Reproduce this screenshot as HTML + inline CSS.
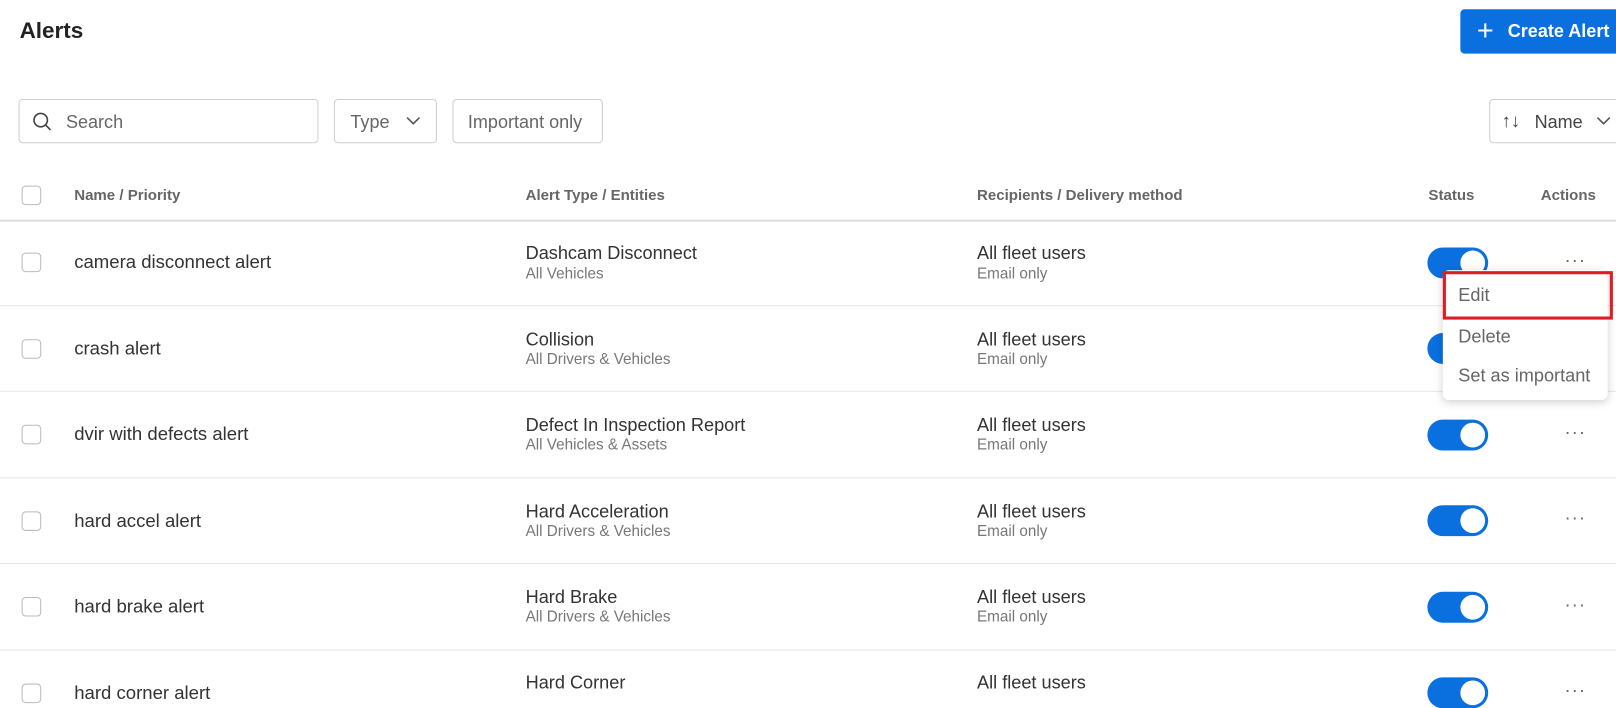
<!DOCTYPE html>
<html><head><meta charset="utf-8"><style>
html,body{margin:0;padding:0;background:#fff;overflow:hidden;width:1616px;height:697px}
#w{position:absolute;left:0;top:0;width:1568px;height:676px;transform:scale(1.0306,1.031);transform-origin:0 0;font-family:"Liberation Sans",sans-serif;color:#333}
.a{position:absolute;white-space:nowrap}
.box{position:absolute;border:1px solid #cfcfcf;border-radius:4px;box-sizing:border-box;background:#fff}
.cb{position:absolute;width:19px;height:19px;border:1px solid #bbb;border-radius:4px;box-sizing:border-box;left:21px}
.h{font-size:14.6px;font-weight:bold;color:#666}
.nm{font-size:18px;color:#333}
.t1{font-size:17.6px;color:#333}
.t2{font-size:14.8px;color:#777}
.sep{position:absolute;left:0;width:1568px;height:1px;background:#e6e6e6}
.tg{position:absolute;left:1385px;width:59px;height:30px;border-radius:15px;background:#0a70e0}
.tg:after{content:"";position:absolute;right:3px;top:3px;width:24px;height:24px;border-radius:50%;background:#fff}
.dots{position:absolute;left:1518px;font-size:18px;color:#666;letter-spacing:1px}
</style></head><body><div id="w">
<div class="a" style="left:19px;top:17px;font-size:21.8px;font-weight:bold;color:#222">Alerts</div>
<div class="a" style="left:1417px;top:9px;width:160px;height:43px;background:#0a70e0;border-radius:4px;color:#fff;font-size:17.5px;font-weight:bold;line-height:43px"><span style="font-weight:normal;font-size:28px;position:absolute;left:16px;top:-1px">+</span><span style="position:absolute;left:46px">Create Alert</span></div>

<div class="box" style="left:18px;top:96px;width:291px;height:43px"></div>
<svg class="a" style="left:31px;top:108px" width="20" height="20" viewBox="0 0 20 20"><circle cx="8.5" cy="8.5" r="6.5" fill="none" stroke="#444" stroke-width="1.6"/><path d="M13.3 13.3L18 18" stroke="#444" stroke-width="1.6"/></svg>
<div class="a" style="left:64px;top:108px;font-size:17.5px;color:#666">Search</div>
<div class="box" style="left:324px;top:96px;width:100px;height:43px"></div>
<div class="a" style="left:340px;top:108px;font-size:17.5px;color:#666">Type</div>
<svg class="a" style="left:394px;top:112px" width="14" height="10"><path d="M1 2l6 6 6-6" fill="none" stroke="#555" stroke-width="1.5"/></svg>
<div class="box" style="left:439px;top:96px;width:146px;height:43px"></div>
<div class="a" style="left:454px;top:108px;font-size:17.5px;color:#666">Important only</div>
<div class="box" style="left:1445px;top:96px;width:140px;height:43px"></div>
<div class="a" style="left:1457px;top:107px;font-size:18px;color:#444">↑↓</div>
<div class="a" style="left:1489px;top:108px;font-size:17.5px;color:#444">Name</div>
<svg class="a" style="left:1549px;top:112px" width="14" height="10"><path d="M1 2l6 6 6-6" fill="none" stroke="#555" stroke-width="1.5"/></svg>

<div class="cb" style="top:180px"></div>
<div class="a h" style="left:72px;top:182px">Name / Priority</div>
<div class="a h" style="left:510px;top:182px">Alert Type / Entities</div>
<div class="a h" style="left:948px;top:182px">Recipients / Delivery method</div>
<div class="a h" style="left:1386px;top:182px">Status</div>
<div class="a h" style="left:1495px;top:182px">Actions</div>
<div class="sep" style="top:213px;height:2px;background:#ddd"></div>

<div class="cb" style="top:245px"></div><div class="a nm" style="left:72px;top:244px">camera disconnect alert</div>
<div class="a t1" style="left:510px;top:235px">Dashcam Disconnect</div><div class="a t2" style="left:510px;top:258px">All Vehicles</div>
<div class="a t1" style="left:948px;top:235px">All fleet users</div><div class="a t2" style="left:948px;top:258px">Email only</div>
<div class="tg" style="top:240px"></div><div class="dots a" style="top:242px">···</div>
<div class="sep" style="top:296px"></div>

<div class="cb" style="top:329px"></div><div class="a nm" style="left:72px;top:328px">crash alert</div>
<div class="a t1" style="left:510px;top:319px">Collision</div><div class="a t2" style="left:510px;top:341px">All Drivers &amp; Vehicles</div>
<div class="a t1" style="left:948px;top:319px">All fleet users</div><div class="a t2" style="left:948px;top:341px">Email only</div>
<div class="tg" style="top:323px"></div>
<div class="sep" style="top:379px"></div>

<div class="cb" style="top:412px"></div><div class="a nm" style="left:72px;top:411px">dvir with defects alert</div>
<div class="a t1" style="left:510px;top:402px">Defect In Inspection Report</div><div class="a t2" style="left:510px;top:424px">All Vehicles &amp; Assets</div>
<div class="a t1" style="left:948px;top:402px">All fleet users</div><div class="a t2" style="left:948px;top:424px">Email only</div>
<div class="tg" style="top:407px"></div><div class="dots a" style="top:409px">···</div>
<div class="sep" style="top:463px"></div>

<div class="cb" style="top:496px"></div><div class="a nm" style="left:72px;top:495px">hard accel alert</div>
<div class="a t1" style="left:510px;top:486px">Hard Acceleration</div><div class="a t2" style="left:510px;top:508px">All Drivers &amp; Vehicles</div>
<div class="a t1" style="left:948px;top:486px">All fleet users</div><div class="a t2" style="left:948px;top:508px">Email only</div>
<div class="tg" style="top:490px"></div><div class="dots a" style="top:492px">···</div>
<div class="sep" style="top:546px"></div>

<div class="cb" style="top:579px"></div><div class="a nm" style="left:72px;top:578px">hard brake alert</div>
<div class="a t1" style="left:510px;top:569px">Hard Brake</div><div class="a t2" style="left:510px;top:591px">All Drivers &amp; Vehicles</div>
<div class="a t1" style="left:948px;top:569px">All fleet users</div><div class="a t2" style="left:948px;top:591px">Email only</div>
<div class="tg" style="top:574px"></div><div class="dots a" style="top:576px">···</div>
<div class="sep" style="top:630px"></div>

<div class="cb" style="top:663px"></div><div class="a nm" style="left:72px;top:662px">hard corner alert</div>
<div class="a t1" style="left:510px;top:652px">Hard Corner</div>
<div class="a t1" style="left:948px;top:652px">All fleet users</div>
<div class="tg" style="top:657px"></div><div class="dots a" style="top:659px">···</div>

<div class="a" style="left:1400px;top:262px;width:160px;height:126px;background:#fff;border-radius:6px;box-shadow:0 2px 8px rgba(0,0,0,.18)"></div>
<div class="a" style="left:1400px;top:263px;width:165px;height:47px;border:3px solid #e01b24;box-sizing:border-box"></div>
<div class="a" style="left:1415px;top:276px;font-size:17.6px;color:#666">Edit</div>
<div class="a" style="left:1415px;top:316px;font-size:17.6px;color:#666">Delete</div>
<div class="a" style="left:1415px;top:354px;font-size:17.6px;color:#666">Set as important</div>
</div></body></html>
